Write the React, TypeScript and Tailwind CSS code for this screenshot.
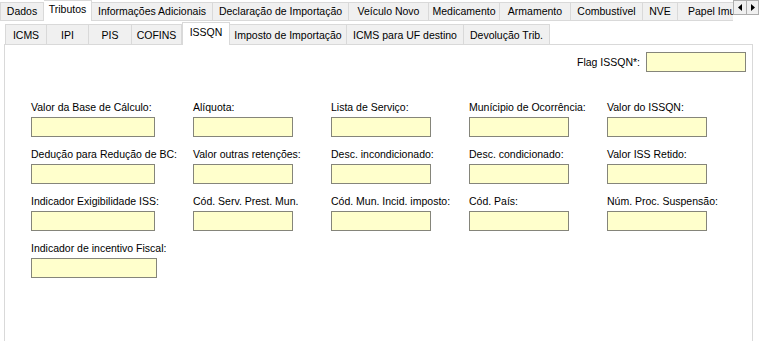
import React from "react";

const FONT = "font-['Liberation_Sans',Arial,sans-serif]";

type T = { label: string; w: number; sel?: boolean };

const top: T[] = [
  { label: "Dados", w: 44 },
  { label: "Tributos", w: 48, sel: true },
  { label: "Informações Adicionais", w: 121 },
  { label: "Declaração de Importação", w: 136 },
  { label: "Veículo Novo", w: 80 },
  { label: "Medicamento", w: 71 },
  { label: "Armamento", w: 71 },
  { label: "Combustível", w: 72 },
  { label: "NVE", w: 35 },
  { label: "Papel Imune", w: 80 },
];

const sub: T[] = [
  { label: "ICMS", w: 42 },
  { label: "IPI", w: 42 },
  { label: "PIS", w: 43 },
  { label: "COFINS", w: 50 },
  { label: "ISSQN", w: 48, sel: true },
  { label: "Imposto de Importação", w: 117 },
  { label: "ICMS para UF destino", w: 117 },
  { label: "Devolução Trib.", w: 86 },
];

const rows: string[][] = [
  ["Valor da Base de Cálculo:", "Alíquota:", "Lista de Serviço:", "Munícipio de Ocorrência:", "Valor do ISSQN:"],
  ["Dedução para Redução de BC:", "Valor outras retenções:", "Desc. incondicionado:", "Desc. condicionado:", "Valor ISS Retido:"],
  ["Indicador Exigibilidade ISS:", "Cód. Serv. Prest. Mun.", "Cód. Mun. Incid. imposto:", "Cód. País:", "Núm. Proc. Suspensão:"],
];

function Field({ label, wide, col1 }: { label: string; wide?: boolean; col1?: boolean }) {
  return (
    <div className="flex flex-col">
      <div className="h-[13px] leading-[13px] whitespace-nowrap text-black">{label}</div>
      <div
        className={`mt-[3px] h-[20px] bg-[#ffffcc] border border-[#85857a] ${
          wide ? "w-[126px]" : col1 ? "w-[124px]" : "w-[100px]"
        }`}
      />
    </div>
  );
}

export default function App() {
  return (
    <div className={`${FONT} w-[759px] h-[341px] overflow-hidden bg-white text-[10.5px] text-black`}>
      {/* top tab row */}
      <div className="flex h-[21px]">
        <div className="w-[733px] h-[21px] overflow-hidden flex items-end">
          {top.map((t, i) =>
            t.sel ? (
              <div
                key={t.label}
                style={{ width: t.w }}
                className="shrink-0 h-[21px] bg-white border-t border-r border-[#d9d9d9] leading-[17px] text-center whitespace-nowrap"
              >
                {t.label}
              </div>
            ) : (
              <div
                key={t.label}
                style={{ width: t.w }}
                className={`shrink-0 h-[19px] bg-[#f0f0f0] border-t border-b border-r border-[#d9d9d9] leading-[17px] text-center whitespace-nowrap ${
                  i === 0 ? "border-l" : ""
                }`}
              >
                {t.label}
              </div>
            )
          )}
        </div>
        <div className="flex self-start">
          <div className="w-[14px] h-[15px] bg-[#f0f0f0] border border-[#adadad] flex items-center justify-center">
            <svg width="4" height="7" viewBox="0 0 4 7">
              <path d="M4 0 L0 3.5 L4 7 Z" fill="#000" />
            </svg>
          </div>
          <div className="w-[12px] h-[15px] bg-[#f0f0f0] border border-l-0 border-[#adadad] flex items-center justify-center">
            <svg width="4" height="7" viewBox="0 0 4 7">
              <path d="M0 0 L4 3.5 L0 7 Z" fill="#000" />
            </svg>
          </div>
        </div>
      </div>

      {/* inner tab control */}
      <div className="ml-[4px] w-[749px]">
        <div className="flex items-end h-[23px] pl-[1px]">
          {sub.map((t) =>
            t.sel ? (
              <div
                key={t.label}
                style={{ width: t.w }}
                className="shrink-0 h-[23px] -mb-[1px] relative z-10 bg-white border-t border-r border-l border-[#d9d9d9] pt-[1px] leading-[17px] text-center whitespace-nowrap"
              >
                {t.label}
              </div>
            ) : (
              <div
                key={t.label}
                style={{ width: t.w }}
                className="shrink-0 h-[20px] bg-[#f0f0f0] border-t border-r border-[#d9d9d9] first:border-l pt-[1px] leading-[18px] text-center whitespace-nowrap"
              >
                {t.label}
              </div>
            )
          )}
        </div>

        <div className="h-[300px] border border-[#d9d9d9] bg-white pt-[7px]">
          <div className="flex justify-end items-center pr-[6px]">
            <span className="mr-[6px] leading-[13px]">Flag ISSQN*:</span>
            <div className="w-[100px] h-[20px] bg-[#ffffcc] border border-[#85857a]" />
          </div>

          <div className="mt-[29px] pl-[26px] grid grid-cols-[162px_138px_138px_138px_138px] gap-y-[11px]">
            {rows.map((r, ri) =>
              r.map((l, ci) => <Field key={`${ri}-${ci}`} label={l} col1={ci === 0} />)
            )}
            <Field label="Indicador de incentivo Fiscal:" wide />
          </div>
        </div>
      </div>
    </div>
  );
}
